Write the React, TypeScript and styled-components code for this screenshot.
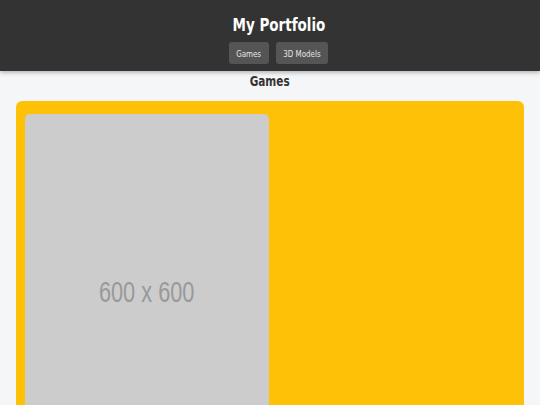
import React from 'react';
import styled, { createGlobalStyle } from 'styled-components';

const GlobalStyle = createGlobalStyle`
  html, body {
    margin: 0;
    padding: 0;
    background-color: #f5f6f8;
    overflow: hidden;
  }
  body {
    font-family: "DejaVu Sans", sans-serif;
    color: #333;
  }
`;

// the reference text is set noticeably narrow, so squeeze glyphs horizontally
const Narrow = styled.span`
  display: inline-block;
  transform: scaleX(0.75);
  transform-origin: center;
  white-space: nowrap;
`;

const Header = styled.header`
  background-color: #333;
  color: #fff;
  padding: 14px 0 7px 17px;
  text-align: center;
  box-shadow: 0 2px 4px rgba(0, 0, 0, 0.25);
  position: relative;
`;

const Title = styled.h1`
  margin: 0 0 6px;
  font-size: 18px;
  line-height: 22px;
  font-weight: 700;
`;

const Nav = styled.nav`
  display: flex;
  justify-content: center;
  gap: 7px;
`;

const NavButton = styled.button<{ width: number }>`
  width: ${p => p.width}px;
  height: 22px;
  padding: 0;
  border: none;
  border-radius: 3px;
  background-color: #555;
  color: #e6e6e6;
  font-family: inherit;
  font-size: 9.5px;
  display: flex;
  align-items: center;
  justify-content: center;
`;

const Main = styled.main`
  padding: 0 16px;
`;

const SectionTitle = styled.h2`
  margin: 0;
  padding: 0 0 10px;
  font-size: 14px;
  line-height: 20px;
  font-weight: 700;
  text-align: center;
  color: #333;
`;

const Card = styled.section`
  background-color: #ffc107;
  border-radius: 6px;
  padding: 13px 9px;
  display: grid;
  grid-template-columns: 244px 1fr;
`;

const Placeholder = styled.div`
  height: 356px;
  border-radius: 5px;
  background-color: #ccc;
  color: #999;
  display: flex;
  align-items: center;
  justify-content: center;
  font-family: "Liberation Sans", Arial, sans-serif;
  font-size: 29px;
`;

const App = () => {
  return (
    <>
      <GlobalStyle />
      <Header>
        <Title>
          <Narrow>My Portfolio</Narrow>
        </Title>
        <Nav>
          <NavButton width={40}>
            <Narrow>Games</Narrow>
          </NavButton>
          <NavButton width={52}>
            <Narrow>3D Models</Narrow>
          </NavButton>
        </Nav>
      </Header>
      <Main>
        <SectionTitle>
          <Narrow>Games</Narrow>
        </SectionTitle>
        <Card>
          <Placeholder>
            <Narrow>600 x 600</Narrow>
          </Placeholder>
        </Card>
      </Main>
    </>
  );
};

export default App;
